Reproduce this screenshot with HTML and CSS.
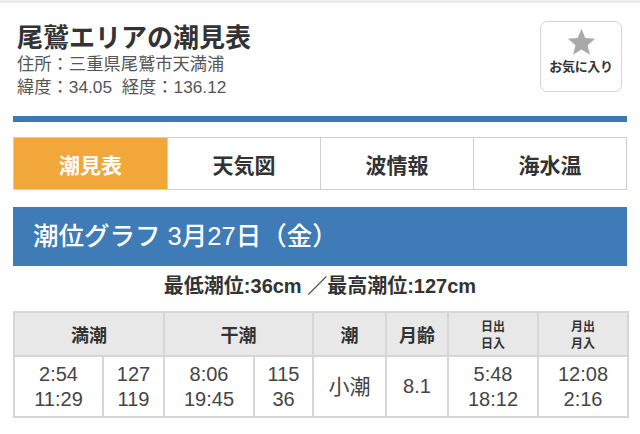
FILE: index.html
```html
<!DOCTYPE html>
<html lang="ja">
<head>
<meta charset="utf-8">
<link rel="stylesheet" href="styles.css">
</head>
<body>
<div class="topline"></div>
<div class="page">
  <header class="head">
    <div class="info">
      <h1 class="title">尾鷲エリアの潮見表</h1>
      <p class="meta">住所：三重県尾鷲市天満浦</p>
      <p class="meta">緯度：34.05&nbsp; 経度：136.12</p>
    </div>
    <button class="fav">
      <svg class="star" viewBox="0 0 24 23" width="29" height="28"><path d="M12 0.6l3.1 7.6 8.2 .6-6.3 5.3 2 8L12 17.8l-7 4.3 2-8L.7 8.8l8.2-.6z" fill="#a9a9a9"/></svg>
      <span class="fav-label">お気に入り</span>
    </button>
  </header>
  <div class="rule"></div>
  <nav class="tabs">
    <div class="tab active">潮見表</div>
    <div class="tab">天気図</div>
    <div class="tab">波情報</div>
    <div class="tab">海水温</div>
  </nav>
  <h2 class="band">潮位グラフ 3月27日（金）</h2>
  <p class="summary">最低潮位:36cm ／最高潮位:127cm</p>
  <table class="tide">
    <colgroup>
      <col style="width:89px"><col style="width:61px">
      <col style="width:90px"><col style="width:59px">
      <col style="width:73px"><col style="width:62px">
      <col style="width:90px"><col style="width:90px">
    </colgroup>
    <thead>
      <tr>
        <th colspan="2">満潮</th>
        <th colspan="2">干潮</th>
        <th>潮</th>
        <th>月齢</th>
        <th class="small"><span class="ln">日出</span><span class="ln">日入</span></th>
        <th class="small"><span class="ln">月出</span><span class="ln">月入</span></th>
      </tr>
    </thead>
    <tbody>
      <tr>
        <td>2:54<br>11:29</td>
        <td>127<br>119</td>
        <td>8:06<br>19:45</td>
        <td>115<br>36</td>
        <td class="jp">小潮</td>
        <td>8.1</td>
        <td>5:48<br>18:12</td>
        <td>12:08<br>2:16</td>
      </tr>
    </tbody>
  </table>
</div>
</body>
</html>
```
FILE: styles.css
```css
* { box-sizing: border-box; }
html, body { margin: 0; padding: 0; background: #fff; }
body {
  font-family: "Noto Sans CJK JP", "Noto Sans", "Liberation Sans", sans-serif;
  color: #333;
}
.topline { height: 3px; background: #ececec; }
.page { padding: 0 13px; }
.head {
  display: flex;
  justify-content: space-between;
  align-items: flex-start;
  height: 113px;
}
.info { padding: 16px 0 0 4px; }
.title {
  margin: 0;
  font-size: 26px;
  line-height: 34px;
  font-weight: 700;
  color: #333;
}
.meta {
  margin: 0;
  font-family: "Liberation Sans", "Noto Sans CJK JP", sans-serif;
  font-size: 17.3px;
  line-height: 23px;
  color: #555;
}
.fav {
  margin: 18px 5px 0 0;
  width: 82px;
  height: 71px;
  border: 1.5px solid #d4d4d4;
  border-radius: 7px;
  background: #fff;
  display: flex;
  flex-direction: column;
  align-items: center;
  padding: 6px 0 0;
  font-family: inherit;
}
.star { display: block; }
.fav-label {
  margin-top: 2px;
  font-size: 13px;
  font-weight: 700;
  line-height: 16px;
  color: #333;
  letter-spacing: -0.3px;
}
.rule { height: 6px; background: #3f78b1; }
.tabs {
  display: grid;
  grid-template-columns: repeat(4, 1fr);
  margin-top: 15px;
  height: 53px;
  border: 1px solid #cfcfcf;
}
.tab {
  display: flex;
  align-items: center;
  justify-content: center;
  font-size: 21px;
  font-weight: 700;
  color: #333;
  border-left: 1px solid #cfcfcf;
}
.tab:first-child { border-left: none; }
.tab.active { background: #f2a73b; color: #fff; }
.band {
  margin: 17px 0 0;
  height: 59px;
  background: #3f7bb6;
  color: #fff;
  font-family: "Liberation Sans", "Noto Sans CJK JP", sans-serif;
  font-size: 25.5px;
  font-weight: 500;
  line-height: 59px;
  padding-left: 20px;
}
.summary {
  margin: 0;
  height: 45px;
  line-height: 40px;
  text-align: center;
  font-family: "Liberation Sans", "Noto Sans CJK JP", sans-serif;
  font-size: 20px;
  font-weight: 700;
  color: #333;
}
.tide {
  width: 614px;
  border-collapse: collapse;
  table-layout: fixed;
  border: 2px solid #d6d6d6;
}
.tide th, .tide td {
  border: 2px solid #d6d6d6;
  text-align: center;
  padding: 0;
}
.tide th {
  background: #e8e8e8;
  height: 44px;
  font-size: 18px;
  font-weight: 700;
  color: #333;
}
.tide th.small { font-size: 12px; }
.tide th.small .ln { display: block; line-height: 17.5px; height: 17.5px; }
.tide td {
  height: 61px;
  font-size: 20px;
  line-height: 25px;
  color: #444;
  font-family: "Liberation Sans", "Noto Sans CJK JP", sans-serif;
}
.tide td.jp { font-size: 21px; }
```
